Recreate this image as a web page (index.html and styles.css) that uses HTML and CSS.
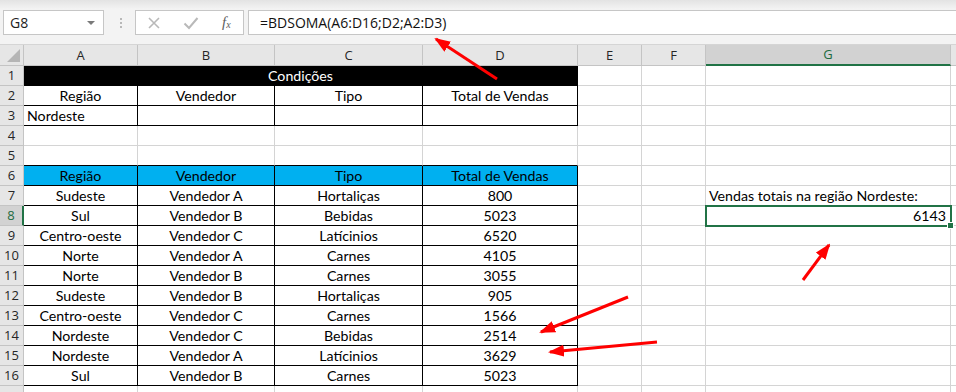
FILE: index.html
```html
<!DOCTYPE html>
<html lang="pt-BR">
<head>
    <meta charset="UTF-8">
    <title>BDSOMA</title>
    <link rel="stylesheet" href="styles.css">
</head>
<body>

<div class="toolbar">
    <div class="namebox">G8<span class="caret"></span></div>
    <div class="grip"></div>
    <div class="fxbox">
        <svg width="14" height="14" viewBox="0 0 14 14"><path d="M2 2 L12 12 M12 2 L2 12" stroke="#b9b9b9" stroke-width="1.6" fill="none"/></svg>
        <svg width="16" height="14" viewBox="0 0 16 14"><path d="M1.5 7.5 L6 12 L14.5 2" stroke="#b9b9b9" stroke-width="2" fill="none"/></svg>
        <span class="fx">f<sub>x</sub></span>
    </div>
    <div class="formula">=BDSOMA(A6:D16;D2;A2:D3)</div>
</div>

<table class="sheet">
    <colgroup>
        <col class="c-head">
        <col class="c-a">
        <col class="c-b">
        <col class="c-c">
        <col class="c-d">
        <col class="c-e">
        <col class="c-f">
        <col class="c-g">
        <col class="c-h">
    </colgroup>
    <tr>
        <th class="corner"><span class="tri"></span></th>
        <th class="col">A</th><th class="col">B</th><th class="col">C</th><th class="col">D</th>
        <th class="col">E</th><th class="col">F</th><th class="col active">G</th><th class="col"></th>
    </tr>
    <tr>
        <th class="row">1</th>
        <td class="title" colspan="4">Condições</td>
        <td></td><td></td><td></td><td></td>
    </tr>
    <tr>
        <th class="row">2</th>
        <td class="b">Região</td><td class="b">Vendedor</td><td class="b">Tipo</td><td class="b">Total de Vendas</td>
        <td></td><td></td><td></td><td></td>
    </tr>
    <tr>
        <th class="row">3</th>
        <td class="b left">Nordeste</td><td class="b"></td><td class="b"></td><td class="b"></td>
        <td></td><td></td><td></td><td></td>
    </tr>
    <tr>
        <th class="row">4</th>
        <td></td><td></td><td></td><td></td><td></td><td></td><td></td><td></td>
    </tr>
    <tr>
        <th class="row">5</th>
        <td class="bb"></td><td class="bb"></td><td class="bb"></td><td class="bb"></td>
        <td></td><td></td><td></td><td></td>
    </tr>
    <tr>
        <th class="row">6</th>
        <td class="b blue">Região</td><td class="b blue">Vendedor</td><td class="b blue">Tipo</td><td class="b blue">Total de Vendas</td>
        <td></td><td></td><td></td><td></td>
    </tr>
    <tr>
        <th class="row">7</th>
        <td class="b">Sudeste</td><td class="b">Vendedor A</td><td class="b">Hortaliças</td><td class="b">800</td>
        <td></td><td></td><td class="left label">Vendas totais na região Nordeste:</td><td></td>
    </tr>
    <tr>
        <th class="row active">8</th>
        <td class="b">Sul</td><td class="b">Vendedor B</td><td class="b">Bebidas</td><td class="b">5023</td>
        <td></td><td></td><td class="sel">6143</td><td></td>
    </tr>
    <tr>
        <th class="row">9</th>
        <td class="b">Centro-oeste</td><td class="b">Vendedor C</td><td class="b">Latícinios</td><td class="b">6520</td>
        <td></td><td></td><td></td><td></td>
    </tr>
    <tr>
        <th class="row">10</th>
        <td class="b">Norte</td><td class="b">Vendedor A</td><td class="b">Carnes</td><td class="b">4105</td>
        <td></td><td></td><td></td><td></td>
    </tr>
    <tr>
        <th class="row">11</th>
        <td class="b">Norte</td><td class="b">Vendedor B</td><td class="b">Carnes</td><td class="b">3055</td>
        <td></td><td></td><td></td><td></td>
    </tr>
    <tr>
        <th class="row">12</th>
        <td class="b">Sudeste</td><td class="b">Vendedor B</td><td class="b">Hortaliças</td><td class="b">905</td>
        <td></td><td></td><td></td><td></td>
    </tr>
    <tr>
        <th class="row">13</th>
        <td class="b">Centro-oeste</td><td class="b">Vendedor C</td><td class="b">Carnes</td><td class="b">1566</td>
        <td></td><td></td><td></td><td></td>
    </tr>
    <tr>
        <th class="row">14</th>
        <td class="b">Nordeste</td><td class="b">Vendedor C</td><td class="b">Bebidas</td><td class="b">2514</td>
        <td></td><td></td><td></td><td></td>
    </tr>
    <tr>
        <th class="row">15</th>
        <td class="b">Nordeste</td><td class="b">Vendedor A</td><td class="b">Latícinios</td><td class="b">3629</td>
        <td></td><td></td><td></td><td></td>
    </tr>
    <tr>
        <th class="row">16</th>
        <td class="b">Sul</td><td class="b">Vendedor B</td><td class="b">Carnes</td><td class="b">5023</td>
        <td></td><td></td><td></td><td></td>
    </tr>
    <tr>
        <th class="row"></th>
        <td></td><td></td><td></td><td></td><td></td><td></td><td></td><td></td>
    </tr>
</table>

<!-- red arrows drawn over the sheet -->
<svg class="arrows" width="956" height="392">
    <defs>
        <marker id="head" markerUnits="userSpaceOnUse" markerWidth="16" markerHeight="12" refX="14" refY="6" orient="auto">
            <path d="M0 0 L16 6 L0 12 Z" fill="#ff0000"/>
        </marker>
    </defs>
    <line x1="497" y1="79" x2="436" y2="39" stroke="#ff0000" stroke-width="3" marker-end="url(#head)"/>
    <line x1="628" y1="297" x2="541" y2="332" stroke="#ff0000" stroke-width="3" marker-end="url(#head)"/>
    <line x1="657" y1="342" x2="550" y2="352" stroke="#ff0000" stroke-width="3" marker-end="url(#head)"/>
    <line x1="803" y1="280" x2="829" y2="245" stroke="#ff0000" stroke-width="3" marker-end="url(#head)"/>
</svg>

</body>
</html>
```

FILE: styles.css
```css
body {
    margin: 0;
    width: 956px;
    height: 392px;
    overflow: hidden;
    position: relative;
    background: #ffffff;
    font-family: Lato, "Liberation Sans", sans-serif;
}
.toolbar {
    height: 45px;
    box-sizing: border-box;
    padding-top: 10px;
    display: flex;
    align-items: flex-start;
    background: linear-gradient(#e3e3e3, #f3f3f3 9px, #f3f3f3);
    border-bottom: 1px solid #d5d5d5;
    font-family: "Open Sans", sans-serif;
}
.namebox {
    margin-left: 3px;
    width: 101px;
    height: 25px;
    box-sizing: border-box;
    background: #fff;
    border: 1px solid #c6c6c6;
    font-size: 14px;
    line-height: 23px;
    padding-left: 6px;
    color: #222;
    position: relative;
}
.caret {
    position: absolute;
    right: 8px;
    top: 10px;
    border-left: 4px solid transparent;
    border-right: 4px solid transparent;
    border-top: 4px solid #7a7a7a;
}
.grip {
    margin: 8px 0 0 16px;
    width: 2px;
    height: 10px;
    border-left: 2px dotted #b8b8b8;
    box-sizing: border-box;
}
.fxbox {
    margin-left: 13px;
    width: 109px;
    height: 25px;
    box-sizing: border-box;
    background: #fff;
    border: 1px solid #c6c6c6;
    display: flex;
    align-items: center;
    padding-left: 11px;
    gap: 22px;
}
.fx {
    font-family: "Liberation Serif", serif;
    font-style: italic;
    font-size: 15px;
    color: #5e5e5e;
    margin-left: 1px;
}
.fx sub {
    font-size: 10px;
    vertical-align: -1px;
}
.formula {
    margin-left: 4px;
    flex: 1;
    height: 25px;
    box-sizing: border-box;
    background: #fff;
    border: 1px solid #c6c6c6;
    border-right: none;
    font-size: 14px;
    line-height: 23px;
    padding-left: 11px;
    color: #111;
}

.sheet {
    border-collapse: separate;
    border-spacing: 0;
    table-layout: fixed;
    width: 991px;
    font-size: 14.2px;
    color: #000;
}
.c-head { width: 24px; }
.c-a { width: 114px; }
.c-b { width: 137px; }
.c-c { width: 148px; }
.c-d { width: 155px; }
.c-e { width: 64px; }
.c-f { width: 64px; }
.c-g { width: 245px; }
.c-h { width: 40px; }

.sheet tr {
    height: 20px;
}
.sheet td, .sheet th {
    padding: 0;
    height: 19px;
    line-height: 19px;
    border-right: 1px solid #d4d4d4;
    border-bottom: 1px solid #d4d4d4;
    text-align: center;
    white-space: nowrap;
    overflow: visible;
}
.sheet th {
    background: #e6e6e6;
    font-family: "Open Sans", sans-serif;
    font-weight: normal;
    font-size: 13px;
    color: #262626;
    border-color: #c4c4c4;
}
.sheet th.active {
    background: #d2d2d2;
    color: #1e6b40;
}
.sheet th.col.active {
    border-bottom: 2px solid #217346;
    height: 18px;
}
.sheet th.row.active {
    border-right: 2px solid #217346;
}
.corner {
    position: relative;
}
.tri {
    position: absolute;
    right: 3px;
    bottom: 3px;
    width: 13px;
    height: 13px;
    background: #b5b5b5;
    clip-path: polygon(100% 0, 100% 100%, 0 100%);
}

.sheet td.b {
    border-right-color: #000;
    border-bottom-color: #000;
}
.sheet td.bb {
    border-bottom-color: #000;
}
.sheet td.title {
    background: #000;
    color: #fff;
    border-color: #000;
}
.sheet td.blue {
    background: #00b0f0;
}
.sheet td.left {
    text-align: left;
    padding-left: 3px;
}
.sheet td.sel {
    text-align: right;
    padding-right: 4px;
    position: relative;
    outline: 2px solid #217346;
    outline-offset: -1px;
}
.sheet td.sel::after {
    content: "";
    position: absolute;
    right: -4px;
    bottom: -4px;
    width: 5px;
    height: 5px;
    background: #217346;
    border: 1px solid #fff;
}

.arrows {
    position: absolute;
    left: 0;
    top: 0;
    pointer-events: none;
}
```
